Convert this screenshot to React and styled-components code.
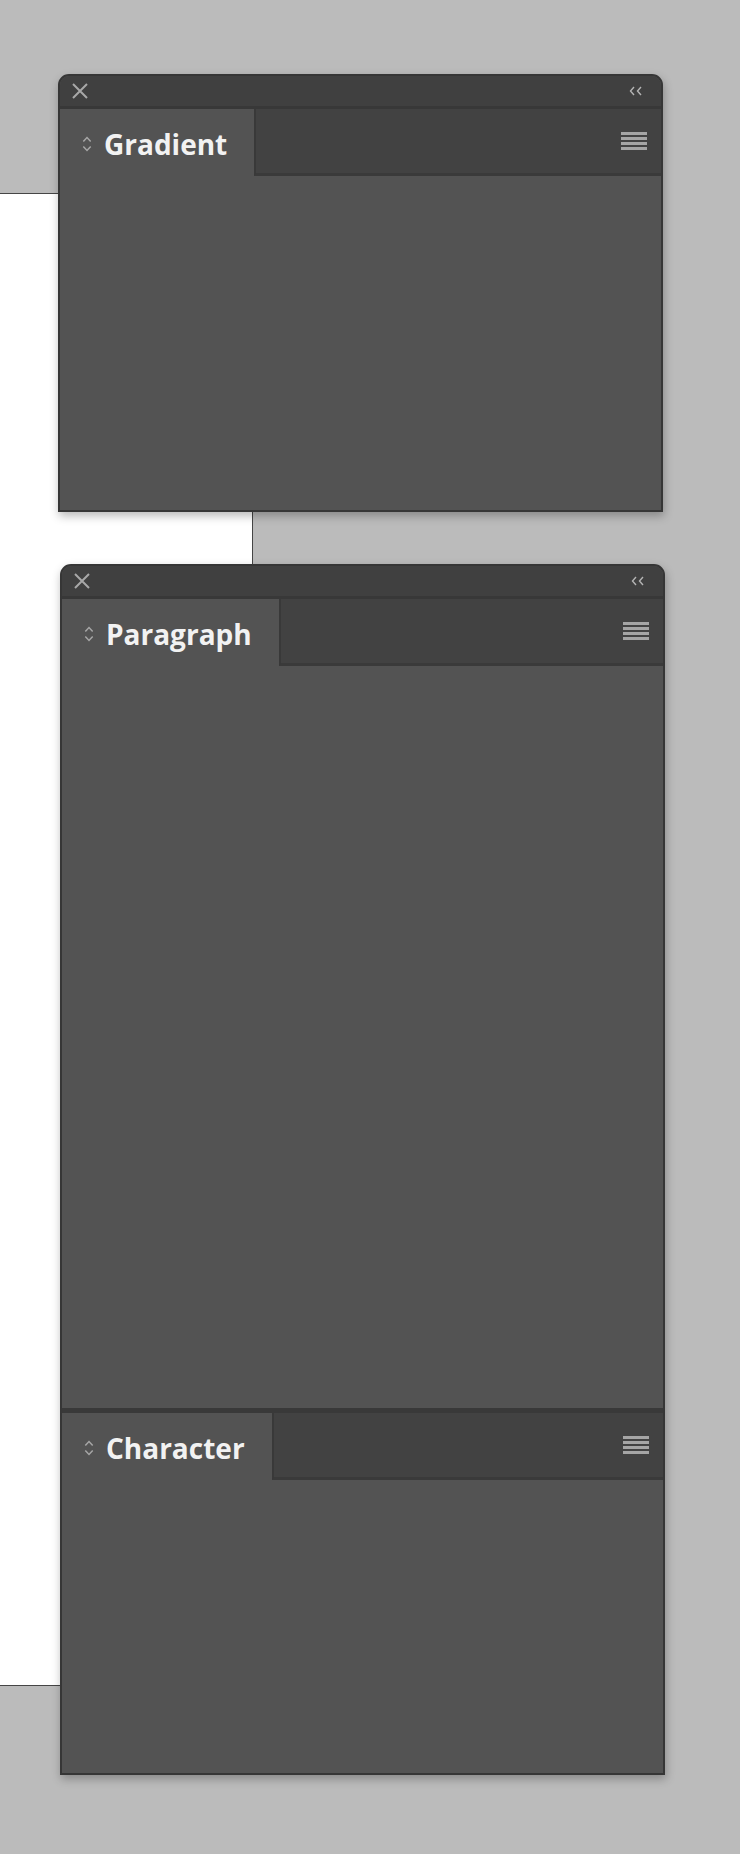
import React from 'react';
import styled, { createGlobalStyle } from 'styled-components';

const Global = createGlobalStyle`
  html, body { margin: 0; padding: 0; background: #bbbbbb; }
  body { font-family: "Open Sans", "Liberation Sans", sans-serif; }
`;

const Workspace = styled.div`
  position: relative;
  width: 740px;
  min-height: 1854px;
  background: #bbbbbb;
  padding-top: 74px;
  box-sizing: border-box;
  display: flex;
  flex-direction: column;
  gap: 52px;
`;

// the document behind the panels
const Artboard = styled.div`
  position: absolute;
  left: -1px;
  top: 193px;
  width: 252px;
  height: 1491px;
  background: #ffffff;
  border: 1px solid #454545;
`;

const Panel = styled.section`
  position: relative;
  width: 605px;
  height: ${p => p.$h}px;
  margin-left: ${p => p.$x}px;
  box-sizing: border-box;
  display: flex;
  flex-direction: column;
  background: #535353;
  border: 2px solid #363636;
  border-radius: 11px 11px 0 0;
  box-shadow: 1px 4px 10px rgba(0, 0, 0, 0.28);
  overflow: hidden;
`;

const TitleBar = styled.div`
  height: 30px;
  flex: none;
  display: flex;
  align-items: center;
  justify-content: space-between;
  padding: 0 18px 0 11px;
  background: #404040;
  border-bottom: 3px solid #383838;
`;

const Header = styled.div`
  height: 67px;
  flex: none;
  display: flex;
  border-top: ${p => (p.$split ? '5px solid #393939' : 'none')};
`;

const Tab = styled.div`
  display: flex;
  align-items: center;
  gap: 12px;
  padding: 2px 27px 0 22px;
  background: #535353;
  color: #f2f2f2;
  font-size: 28px;
  font-weight: 700;
`;

const TabFill = styled.div`
  flex: 1;
  display: flex;
  align-items: center;
  justify-content: flex-end;
  padding-right: 14px;
  background: #424242;
  border-left: 2px solid #393939;
  border-bottom: 3px solid #3a3a3a;
`;

const Body = styled.div`
  flex: ${p => (p.$h ? 'none' : '1')};
  height: ${p => (p.$h ? `${p.$h}px` : 'auto')};
  background: #535353;
`;

const IconButton = styled.span`
  display: flex;
  align-items: center;
`;

const CloseIcon = () => (
  <svg width="18" height="18" viewBox="0 0 18 18">
    <path d="M2 2 L16 16 M16 2 L2 16" stroke="#a8a8a8" strokeWidth="2" fill="none" />
  </svg>
);

const CollapseIcon = () => (
  <svg width="14" height="10" viewBox="0 0 14 10">
    <path d="M5 1 L1.5 5 L5 9 M12 1 L8.5 5 L12 9" stroke="#b4b4b4" strokeWidth="1.4" fill="none" />
  </svg>
);

const SortIcon = () => (
  <svg width="10" height="18" viewBox="0 0 10 18">
    <path d="M1.3 6.5 L5 2.5 L8.7 6.5 M1.3 11.5 L5 15.5 L8.7 11.5" stroke="#a6a6a6" strokeWidth="1.5" fill="none" />
  </svg>
);

const MenuIcon = () => (
  <svg width="26" height="18" viewBox="0 0 26 18">
    {[0, 5, 10, 15].map(y => (
      <rect key={y} x="0" y={y} width="26" height="3" fill="#a5a5a5" />
    ))}
  </svg>
);

const PanelHeader = ({ title, split }) => (
  <Header $split={split}>
    <Tab>
      <SortIcon />
      {title}
    </Tab>
    <TabFill>
      <IconButton><MenuIcon /></IconButton>
    </TabFill>
  </Header>
);

const Chrome = () => (
  <TitleBar>
    <IconButton><CloseIcon /></IconButton>
    <IconButton><CollapseIcon /></IconButton>
  </TitleBar>
);

export default function App() {
  return (
    <>
      <Global />
      <Workspace>
        <Artboard />
        <Panel $x={58} $h={438}>
          <Chrome />
          <PanelHeader title="Gradient" />
          <Body />
        </Panel>
        <Panel $x={60} $h={1211}>
          <Chrome />
          <PanelHeader title="Paragraph" />
          <Body $h={742} />
          <PanelHeader title="Character" split />
          <Body />
        </Panel>
      </Workspace>
    </>
  );
}
